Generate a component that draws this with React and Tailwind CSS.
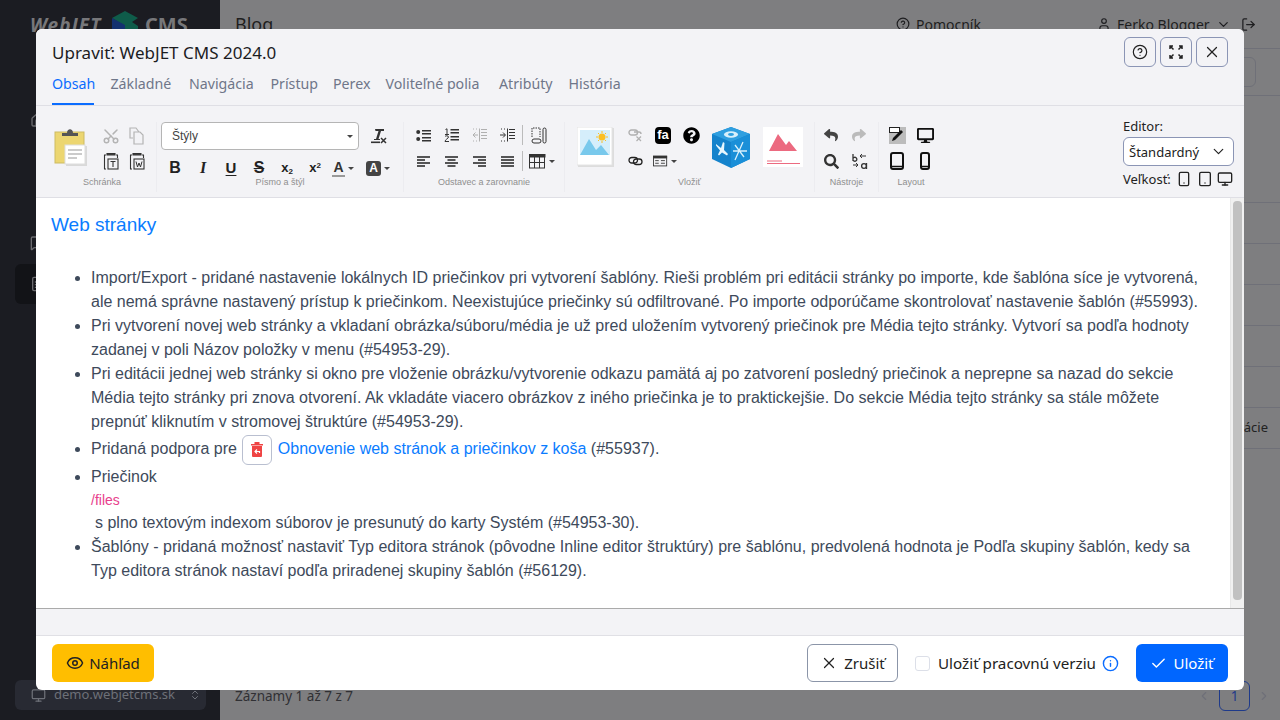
import React from "react";
import { Scissors, CircleHelp, X, Check, Eye, Info, User, LogOut, ChevronDown, ChevronLeft, ChevronRight, House, ChevronsUpDown, Monitor, Tablet, Smartphone, MoreVertical, FileText, MessageSquare } from "lucide-react";
import { FaReply, FaShare, FaSearch, FaQuestionCircle, FaDesktop } from "react-icons/fa";

const Cell = ({ children, w = "w-[28px]", h = "h-[26px]" }) => (
  <div className={`${w} ${h} flex items-center justify-center text-[#222]`}>{children}</div>
);
const Caret = () => <span className="ml-[3px] w-0 h-0 border-x-[3px] border-x-transparent border-t-[3px] border-t-[#444]" />;
const Sep = () => <div className="w-px h-[20px] bg-[#bbb] mx-[1px]" />;

const GroupLabel = ({ children }) => (
  <div className="text-center font-['Liberation_Sans',sans-serif] text-[9px] leading-[12px] text-[#8f8f8f]">{children}</div>
);
const Group = ({ w, label, children }) => (
  <div className={`${w} shrink-0 h-[70px] flex flex-col border-r border-[#ececf0]`}>
    <div className="h-[54px] flex">{children}</div>
    <GroupLabel>{label}</GroupLabel>
  </div>
);

const BigClip = () => (
  <svg width="36" height="41" viewBox="0 0 36 41">
    <rect x="2" y="7" width="29" height="31" fill="#ecd671" stroke="#cdbb62" />
    <path d="M9 11V8h5c0-5 6-5 6 0h5v3z" fill="#555" />
    <rect x="13" y="21" width="21" height="20" fill="#d9d9d9" />
    <rect x="12" y="20" width="20" height="19" fill="#fff" stroke="#ddd" />
    <path d="M15 25h14M15 29h14M15 33h9" stroke="#bbb" strokeWidth="1.5" />
  </svg>
);
const CopyI = () => (
  <svg width="16" height="18" viewBox="0 0 16 18" fill="none" stroke="#b4b4b4" strokeWidth="1.2">
    <path d="M5 1H1v10h3" /><path d="M5 5h6l3 3v9H5zM5 1h2l3 4" />
  </svg>
);
const PasteI = ({ t }) => (
  <svg width="16" height="18" viewBox="0 0 16 18" fill="none" stroke="#333" strokeWidth="1.1">
    <path d="M3 3H1.5v14H3M13 3h1.5v3" /><path d="M4 3h8V1.5H4z" fill="#444" />
    <rect x="5" y="7" width="10" height="10" />
    {t ? <path d="M7.5 9.5h5M10 9.5v5.5" /> : <path d="M7 9.5l1.5 5.5L10 11l1.5 4L13 9.5" strokeWidth="1" />}
  </svg>
);
const ClearI = () => (
  <svg width="18" height="16" viewBox="0 0 18 16" fill="#333">
    <path d="M5 1h9v2H11l-2.5 8H10v1H4v-1h2L8.5 3H5.5z" />
    <rect x="1" y="13.5" width="9" height="1.6" />
    <path d="M11 10l5 5M16 10l-5 5" stroke="#333" strokeWidth="1.5" />
  </svg>
);
const BulletI = () => (
  <svg width="15" height="13" viewBox="0 0 15 13" fill="#333">
    <circle cx="2.2" cy="3" r="2" /><circle cx="2.2" cy="10" r="2" />
    <path d="M6 1h9v1.5H6zM6 4h9v1.5H6zM6 8h9v1.5H6zM6 11h9v1.5H6z" />
  </svg>
);
const NumberI = () => (
  <svg width="15" height="14" viewBox="0 0 15 14" fill="none" stroke="#333">
    <path d="M1.5 1.5L3 .8v5.7M1 6.5h4" strokeWidth="1" />
    <path d="M1 8.5c.5-1 3.5-1 3.5.5S1 11.5 1 13.5h4" strokeWidth="1" />
    <path d="M6.5 1.75h8.5M6.5 4.75h8.5M6.5 8.75h8.5M6.5 11.75h8.5" strokeWidth="1.5" />
  </svg>
);
const IndentI = ({ out }) => {
  const c = out ? "#b0b0b0" : "#333";
  return (
    <svg width="15" height="14" viewBox="0 0 15 14" fill="none" stroke={c}>
      <path d="M1 1h1M4 1h1M1 13h1M4 13h1" />
      <path d={out ? "M6 7H1.5M3.5 4.5L1 7l2.5 2.5" : "M0 7h5M3 4.5L5.5 7 3 9.5"} />
      <path d="M7.5 .5v13" />
      <path d="M9 1.5h6M9 4.5h6M9 7.5h6M9 10.5h6" />
    </svg>
  );
};
const AlignI = ({ kind }) => {
  const short = kind === "left" ? "M0 5h8M0 11h8" : kind === "center" ? "M2.5 5h8M2.5 11h8" : kind === "right" ? "M5 5h8M5 11h8" : "M0 5h13M0 11h13";
  return (
    <svg width="13" height="13" viewBox="0 0 13 13" fill="none" stroke="#222" strokeWidth="1.7">
      <path d="M0 2h13M0 8h13" /><path d={short} />
    </svg>
  );
};
const ChainI = () => (
  <svg width="15" height="10" viewBox="0 0 15 10" fill="none" stroke="#222" strokeWidth="1.3">
    <rect x="1" y="1.5" width="8.5" height="5.5" rx="2.75" />
    <rect x="5.5" y="3" width="8.5" height="5.5" rx="2.75" />
  </svg>
);
const UnlinkI = () => (
  <svg width="15" height="13" viewBox="0 0 15 13" fill="none" stroke="#b0b0b0" strokeWidth="1.4">
    <rect x="1" y="1" width="8.5" height="5" rx="2.5" />
    <path d="M6 3h5c1.5 0 2 1 2 2" />
    <path d="M8.5 7.5l4.5 4.5M13 7.500L8.500 12" strokeWidth="1.2" />
  </svg>
);
const ImgI = () => (
  <svg width="37" height="40" viewBox="0 0 37 40">
    <rect x="1" y="1" width="36" height="39" fill="#ddd" />
    <rect x="0" y="0" width="35" height="38" fill="#fff" stroke="#e4e4e4" />
    <rect x="3" y="3" width="30" height="25" fill="#d5eefb" />
    <path d="M3 28l9-16 7 11 5-5 8 10z" fill="#79c9ec" />
    <circle cx="25" cy="10" r="3.5" fill="#fbbf24" />
    <path d="M25 4v2M25 14v2M19 10h2M29 10h2M21 6l1 1M28 13l1 1M21 14l1-1M28 7l1-1" stroke="#fbbf24" />
  </svg>
);
const FormI = () => (
  <svg width="17" height="13" viewBox="0 0 17 13" fill="none">
    <rect x=".5" y=".5" width="15" height="11" stroke="#333" />
    <rect x="0" y="0" width="16" height="3" fill="#333" />
    <path d="M2.5 5.5h4M2.5 8.5h4M9 5.5h4.5M9 8.5h4.5" stroke="#333" />
  </svg>
);
const TableI = () => (
  <svg width="17" height="15" viewBox="0 0 17 15" fill="none" stroke="#333">
    <rect x=".5" y=".5" width="15" height="13.5" />
    <rect x="0" y="0" width="16" height="3" fill="#333" />
    <path d="M5.5 3v11M10.5 3v11M1 8.5h14" />
  </svg>
);
const BlocksI = () => (
  <svg width="16" height="17" viewBox="0 0 16 17" fill="none" stroke="#333">
    <path d="M1 10V1h8v9" strokeDasharray="1.5 1" />
    <rect x="1" y="12" width="9" height="4" rx="2" />
    <rect x="12" y="1" width="3" height="15" rx="1.5" />
  </svg>
);
const Cube = () => (
  <svg width="40" height="41" viewBox="0 0 40 41">
    <path d="M20 0l19 7v25L20 41 1 32V7z" fill="#1583cc" />
    <path d="M20 0l19 7-19 8L1 7z" fill="#2f9fe0" />
    <path d="M20 15l19-8v25L20 41z" fill="#1a8fd8" />
    <ellipse cx="20" cy="7.5" rx="7" ry="3.2" fill="#d8f0fb" />
    <ellipse cx="20" cy="7.5" rx="3" ry="1.4" fill="#2f9fe0" />
    <path d="M5 17l5 4 2-6 1.5 1-.5 7 4 4-1 1.5-5-3-3 3-1-1 2-4-4-5z" fill="#e6f6fd" />
    <path d="M32 15l-8 18M24 18l9 12M22 24h14" stroke="#d8f0fb" strokeWidth="1.3" />
  </svg>
);
const RedImg = () => (
  <svg width="40" height="40" viewBox="0 0 40 40">
    <rect width="40" height="40" fill="#fff" />
    <path d="M6 24L15 7l8 11 3-4 8 10z" fill="#ec6a80" />
    <path d="M4 34h15" stroke="#ec6a80" /><path d="M4 36.5h33" stroke="#ec6a80" />
  </svg>
);
const LayoutEdit = () => (
  <svg width="17" height="17" viewBox="0 0 17 17">
    <rect width="17" height="17" fill="#bcbcbc" />
    <rect x=".5" y=".5" width="10" height="5" fill="#fff" stroke="#222" />
    <path d="M3 14l1-3 8-8 2 2-8 8z" fill="#111" />
  </svg>
);
const DeviceI = ({ w }) => (
  <svg width={w} height="18" viewBox={`0 0 ${w} 18`} fill="none" stroke="#111" strokeWidth="2">
    <rect x="1" y="1" width={w - 2} height="16" rx="2" />
    <path d={`M1 14.500h${w - 2}`} strokeWidth="1.500" />
  </svg>
);
const ReplaceI = () => (
  <svg width="17" height="17" viewBox="0 0 17 17" fill="none" stroke="#333" strokeWidth="1.3">
    <path d="M2 1v7M2 5.5a2 2 0 1 1 0 1.5" />
    <path d="M9 3h6M11 1L9 3l2 2M2 12h5M5 10l2 2-2 2" strokeWidth="1" />
    <circle cx="13" cy="13" r="2.4" /><path d="M15.5 10v6" />
  </svg>
);
const ExpandI = () => (
  <svg width="16" height="16" viewBox="0 0 16 16" fill="none" stroke="#222" strokeWidth="1.5">
    <path d="M2 5V2h3M2 2l3.5 3.5M14 5V2h-3M14 2l-3.5 3.5M2 11v3h3M2 14l3.5-3.5M14 11v3h-3M14 14l-3.5-3.5" />
  </svg>
);
const TrashI = () => (
  <svg width="12" height="15" viewBox="0 0 12 15">
    <path d="M0 2h12v1.5H0zM3.5 0h5v2h-5z" fill="#ef4444" />
    <path d="M1 4h10v10a1 1 0 0 1-1 1H2a1 1 0 0 1-1-1z" fill="#ef4444" />
    <path d="M8.5 11V9.5h-4M6 7.5l-2 2 2 2" stroke="#fff" strokeWidth="1.2" fill="none" />
  </svg>
);
const LogoMark = () => (
  <svg width="28" height="30" viewBox="0 0 28 30">
    <path d="M1 8l13-7 13 7-6 4 6 4-13 7v-7L1 8z" fill="#0f5c4a" />
    <path d="M1 8l13 7v14L1 22z" fill="#13316f" />
    <path d="M14 15l13 1v6l-13 7z" fill="#0f5c4a" />
  </svg>
);
const BarBtn = ({ children }) => (
  <button className="w-[32px] h-[30px] rounded-[6px] border border-[#8b95b5] flex items-center justify-center text-[#222]">{children}</button>
);

const tabs = [["Obsah", "w-[42px]"], ["Základné", "w-[62px]"], ["Navigácia", "w-[65px]"], ["Prístup", "w-[46px]"], ["Perex", "w-[36px]"], ["Voliteľné polia", "w-[97px]"], ["Atribúty", "w-[53px]"], ["História", "w-[52px]"]];

const Toolbar = () => (
  <div className="h-[92px] bg-[#f3f3f6] border-b border-[#dfdfe5] flex pl-[12px] pt-[16px] text-[#222]">
    <Group w="w-[109px]" label="Schránka">
      <div className="pl-[5px] pr-[9px] pt-[3px]"><BigClip /></div>
      <div className="grid grid-cols-[26px_26px] auto-rows-[25px] content-start pt-[1px]">
        <Cell w="w-[26px]" h="h-[25px]"><Scissors size={18} color="#b4b4b4" className="-rotate-90" /></Cell>
        <Cell w="w-[26px]" h="h-[25px]"><CopyI /></Cell>
        <Cell w="w-[26px]" h="h-[25px]"><PasteI t /></Cell>
        <Cell w="w-[26px]" h="h-[25px]"><PasteI /></Cell>
      </div>
    </Group>
    <Group w="w-[247px]" label="Písmo a štýl">
      <div className="flex flex-col pl-[4px]">
        <div className="flex items-center">
          <div className="w-[198px] h-[28px] bg-white border border-[#b5b5b5] rounded-[4px] flex items-center justify-between pl-[10px] pr-[5px] text-[12px] font-['Liberation_Sans',sans-serif] text-[#444]">
            <span>Štýly</span><Caret />
          </div>
          <div className="w-[40px] flex justify-center"><ClearI /></div>
        </div>
        <div className="flex items-center mt-[5px] h-[26px] font-['Liberation_Sans',sans-serif] text-[#333]">
          <Cell><b className="text-[16px]">B</b></Cell>
          <Cell><b className="text-[16px] italic font-['Liberation_Serif',serif]">I</b></Cell>
          <Cell><b className="text-[15px] underline underline-offset-2">U</b></Cell>
          <Cell><b className="text-[16px] line-through">S</b></Cell>
          <Cell><b className="text-[13px]">x<sub className="text-[8px]">2</sub></b></Cell>
          <Cell><b className="text-[13px]">x<sup className="text-[8px]">2</sup></b></Cell>
          <div className="w-[28px] h-[26px] flex items-center justify-center"><b className="text-[14px] border-b-2 border-[#999] leading-[15px] px-[1px]">A</b><Caret /></div>
          <div className="w-[36px] h-[26px] flex items-center justify-center pl-[6px]"><b className="text-[12px] w-[15px] h-[15px] leading-[15px] rounded-[3px] text-center bg-[#444] text-white">A</b><Caret /></div>
        </div>
      </div>
    </Group>
    <Group w="w-[161px]" label="Odstavec a zarovnanie">
      <div className="grid grid-cols-[28px_28px_28px_28px_4px_28px] pl-[5px] auto-rows-[26px] content-start items-center">
        <Cell><BulletI /></Cell>
        <Cell><NumberI /></Cell>
        <Cell><IndentI out /></Cell>
        <Cell><IndentI /></Cell>
        <Sep />
        <Cell><BlocksI /></Cell>
        <Cell><AlignI kind="left" /></Cell>
        <Cell><AlignI kind="center" /></Cell>
        <Cell><AlignI kind="right" /></Cell>
        <Cell><AlignI kind="justify" /></Cell>
        <Sep />
        <div className="flex items-center justify-center w-[34px]"><TableI /><Caret /></div>
      </div>
    </Group>
    <Group w="w-[250px]" label="Vložiť">
      <div className="pl-[12px] pt-[5px] pr-[7px]"><ImgI /></div>
      <div className="grid grid-cols-[28px_28px_28px] auto-rows-[26px] content-start pr-[6px]">
        <Cell><UnlinkI /></Cell>
        <Cell><b className="w-[16px] h-[17px] rounded-[4px] bg-black text-white text-[13px] leading-[15px] text-center font-['Liberation_Sans',sans-serif]">fa</b></Cell>
        <Cell><FaQuestionCircle size={17} color="#000" /></Cell>
        <Cell><ChainI /></Cell>
        <div className="flex items-center justify-center w-[28px] pl-[4px]"><FormI /><Caret /></div>
      </div>
      <div className="pt-[5px]"><Cube /></div>
      <div className="pt-[5px] pl-[12px]"><RedImg /></div>
    </Group>
    <Group w="w-[64px]" label="Nástroje">
      <div className="grid grid-cols-[28px_28px] auto-rows-[26px] content-start pl-[2px]">
        <Cell><FaReply size={14} color="#444" /></Cell>
        <Cell><FaShare size={14} color="#bbb" /></Cell>
        <Cell><FaSearch size={15} color="#333" /></Cell>
        <Cell><ReplaceI /></Cell>
      </div>
    </Group>
    <div className="w-[64px] h-[70px] flex flex-col">
      <div className="h-[54px]">
        <div className="grid grid-cols-[28px_28px] auto-rows-[26px] content-start pl-[4px]">
          <Cell><LayoutEdit /></Cell>
          <Cell><FaDesktop size={17} color="#111" /></Cell>
          <Cell><DeviceI w={14} /></Cell>
          <Cell><DeviceI w={10} /></Cell>
        </div>
      </div>
      <GroupLabel>Layout</GroupLabel>
    </div>
    <div className="ml-auto mr-[10px] w-[111px] -mt-[1px] text-[13px] leading-[18px] text-[#222]">
      <div className="h-[15px] leading-[11px]">Editor:</div>
      <div className="h-[29px] mt-[1px] bg-white border border-[#8b95b5] rounded-[6px] flex items-center justify-between pl-[5px] pr-[6px]">
        <span>Štandardný</span><ChevronDown size={17} strokeWidth={1.7} />
      </div>
      <div className="flex items-center mt-[3px] h-[20px] whitespace-nowrap">
        <span>Veľkosť:</span>
        <Smartphone size={16} className="ml-[5px]" />
        <Tablet size={16} className="ml-[5px]" />
        <Monitor size={16} className="ml-[4px]" />
      </div>
    </div>
  </div>
);

const Content = () => (
  <div className="h-[410px] bg-white flex font-['Liberation_Sans',sans-serif] text-[16px] leading-[24px] text-[#3e4a5b]">
    <div className="flex-1 px-[15px] pt-[15px] overflow-hidden">
      <h2 className="text-[19px] leading-[24px] text-[#0a7cff] mb-[29px]">Web stránky</h2>
      <ul className="list-disc pl-[40px]">
        <li>Import/Export - pridané nastavenie lokálnych ID priečinkov pri vytvorení šablóny. Rieši problém pri editácii stránky po importe, kde šablóna síce je vytvorená, ale nemá správne nastavený prístup k priečinkom. Neexistujúce priečinky sú odfiltrované. Po importe odporúčame skontrolovať nastavenie šablón (#55993).</li>
        <li>Pri vytvorení novej web stránky a vkladaní obrázka/súboru/média je už pred uložením vytvorený priečinok pre Média tejto stránky. Vytvorí sa podľa hodnoty zadanej v poli Názov položky v menu (#54953-29).</li>
        <li>Pri editácii jednej web stránky si okno pre vloženie obrázku/vytvorenie odkazu pamätá aj po zatvorení posledný priečinok a neprepne sa nazad do sekcie Média tejto stránky pri znova otvorení. Ak vkladáte viacero obrázkov z iného priečinka je to praktickejšie. Do sekcie Média tejto stránky sa stále môžete prepnúť kliknutím v stromovej štruktúre (#54953-29).</li>
        <li className="h-[30px] leading-[30px]">
          Pridaná podpora pre{" "}
          <span className="inline-flex align-middle w-[30px] h-[30px] mx-[1px] border border-[#b9bfd0] rounded-[6px] items-center justify-center bg-white"><TrashI /></span>{" "}
          <span className="text-[#0a7cff]">Obnovenie web stránok a priečinkov z koša</span> (#55937).
        </li>
        <li className="mt-[1px]">
          Priečinok
          <div className="text-[14px] leading-[22px] text-[#e83e8c]">/files</div>
          <div className="pl-[4px]">s plno textovým indexom súborov je presunutý do karty Systém (#54953-30).</div>
        </li>
        <li>Šablóny - pridaná možnosť nastaviť Typ editora stránok (pôvodne Inline editor štruktúry) pre šablónu, predvolená hodnota je Podľa skupiny šablón, kedy sa Typ editora stránok nastaví podľa priradenej skupiny šablón (#56129).</li>
      </ul>
    </div>
    <div className="w-[14px] shrink-0 bg-[#f1f1f1] border-l border-[#e8e8e8] px-[2px] pt-[3px]">
      <div className="h-[399px] bg-[#c1c1c1] rounded-[4px]" />
    </div>
  </div>
);

const Modal = () => (
  <div className="absolute left-[36px] top-[29px] w-[1208px] h-[661px] rounded-[6px] overflow-hidden flex flex-col bg-white text-[#222]">
    <div className="h-[77px] bg-[#f3f3f6] border-b border-[#dfdfe5] px-[16px] shrink-0">
      <div className="flex items-start justify-between pt-[8px] h-[44px]">
        <div className="text-[17px] leading-[32px] text-[#1c1c1f] tracking-[0.02px]">Upraviť: WebJET CMS 2024.0</div>
        <div className="flex gap-[4px]">
          <BarBtn><CircleHelp size={16} strokeWidth={1.8} /></BarBtn>
          <BarBtn><ExpandI /></BarBtn>
          <BarBtn><X size={18} strokeWidth={1.6} /></BarBtn>
        </div>
      </div>
      <div className="flex gap-[16.5px] h-[32px]">
        {tabs.map(([t, w], i) => (
          <div key={t} className={`${w} h-[32px] whitespace-nowrap text-[14.2px] leading-[22px] ${i === 0 ? "text-[#0a6cff] border-b-2 border-[#0a6cff]" : "text-[#6f7689]"}`}>{t}</div>
        ))}
      </div>
    </div>
    <Toolbar />
    <Content />
    <div className="h-[28px] bg-[#f3f3f6] border-t border-[#aaaaaa] border-b border-b-[#e0e0e5] shrink-0" />
    <div className="flex-1 flex items-center px-[16px]">
      <button className="w-[102px] h-[38px] rounded-[6px] bg-[#ffbe00] text-[#222] text-[15px] flex items-center justify-center gap-[5px]"><Eye size={18} />Náhľad</button>
      <div className="flex-1" />
      <button className="w-[91px] h-[38px] rounded-[6px] border border-[#8b95a8] bg-white text-[15px] flex items-center justify-center gap-[6px]"><X size={18} strokeWidth={1.6} />Zrušiť</button>
      <span className="ml-[17px] w-[15px] h-[15px] border border-[#dcdfe8] rounded-[3px]" />
      <span className="ml-[8px] text-[15.2px]">Uložiť pracovnú verziu</span>
      <Info size={17} className="ml-[6px] text-[#0a6cff]" />
      <button className="ml-[17px] w-[92px] h-[38px] rounded-[6px] bg-[#0066ff] text-white text-[15px] flex items-center justify-center gap-[6px]"><Check size={17} />Uložiť</button>
    </div>
  </div>
);

const Row = ({ h, children }) => <div className={`${h} border-b border-[#6f7078] flex items-center justify-end pr-[12px] text-[13px] text-[#222]`}>{children}</div>;

export default function App() {
  return (
    <div className="relative w-[1280px] h-[720px] overflow-hidden flex font-['Noto_Sans',sans-serif]">
      <aside className="w-[220px] shrink-0 bg-[#1b1c22] flex flex-col pl-[15px] pr-[14px] text-[#6b6b6f]">
        <div className="h-[48px] flex items-center pl-[15px] pt-[2px] whitespace-nowrap">
          <span className="italic font-bold text-[19px] text-[#77777a] tracking-[1px] w-[81px]">WebJET</span>
          <LogoMark />
          <span className="font-bold text-[20px] text-[#77777a] ml-[6px]">CMS</span>
        </div>
        <div className="h-[80px] flex items-end pl-[15px]"><House size={16} /></div>
        <div className="h-[123px] flex items-end pl-[15px]"><MessageSquare size={16} /></div>
        <div className="h-[40px] w-full mt-[13px] bg-[#121317] rounded-[6px] flex items-center pl-[15px]"><FileText size={16} /></div>
        <div className="h-[30px] mb-[10px] mt-auto bg-[#282a33] rounded-[6px] flex items-center pl-[16px] pr-[5px] text-[13px] text-[#6d7078] gap-[8px]">
          <Monitor size={15} /><span className="flex-1">demo.webjetcms.sk</span><ChevronsUpDown size={12} />
        </div>
      </aside>
      <main className="w-[1060px] min-w-0 bg-[#7e7e80] flex flex-col text-[#1e1e20]">
        <div className="h-[49px] border-b border-[#6f7078] flex items-center pl-[15px] text-[14px] whitespace-nowrap">
          <span className="text-[18px] w-[35px]">Blog</span>
          <span className="ml-[626px] flex items-center gap-[6px] w-[80px]"><CircleHelp size={14} className="shrink-0" />Pomocník</span>
          <span className="ml-[121px] flex items-center gap-[6px] w-[121px]"><User size={14} className="shrink-0" />Ferko Blogger<ChevronDown size={15} className="shrink-0" /></span>
          <LogOut size={15} className="ml-[23px]" />
        </div>
        <Row h="h-[47px]"><div className="w-[32px] h-[30px] border border-[#6f7078] rounded-[6px] flex items-center justify-center mr-[12px]"><MoreVertical size={14} /></div></Row>
        <Row h="h-[107px]" />
        <Row h="h-[41px]" /><Row h="h-[41px]" /><Row h="h-[41px]" /><Row h="h-[41px]" /><Row h="h-[41px]" />
        <Row h="h-[41px]"><span className="text-[#222]">ácie</span></Row>
        <div className="mt-auto h-[48px] flex items-center pl-[15px] pr-[9px] text-[13.5px] text-[#303034]">
          <span className="flex-1 pt-[1px]">Záznamy 1 až 7 z 7</span>
          <ChevronLeft size={14} className="text-[#6f7078]" />
          <span className="ml-[8px] mr-[7px] w-[31px] h-[30px] border border-[#1e3a8a] rounded-[6px] flex items-center justify-center text-[#1e3a8a]">1</span>
          <ChevronRight size={14} className="text-[#6f7078]" />
        </div>
      </main>
      <Modal />
    </div>
  );
}
